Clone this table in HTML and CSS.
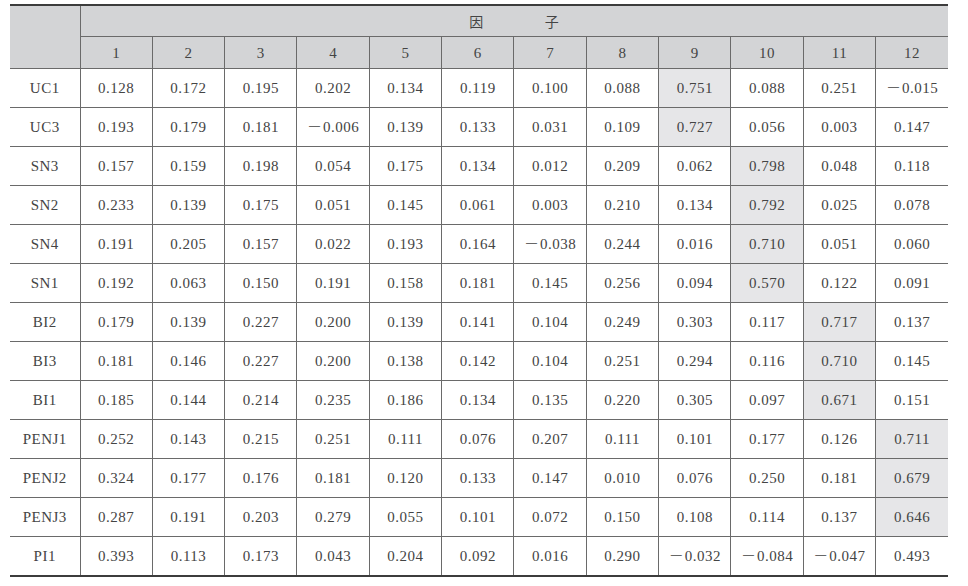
FILE: index.html
```html
<!DOCTYPE html>
<html>
<head>
<meta charset="utf-8">
<link rel="stylesheet" href="styles.css">
</head>
<body>
<table class="grid">
  <colgroup>
    <col class="c-label">
    <col span="12" class="c-num">
  </colgroup>
  <thead>
    <tr class="h1">
      <th rowspan="2" class="corner"></th>
      <th colspan="12" class="factor"><span>因</span><span>子</span></th>
    </tr>
    <tr class="h2">
      <th>1</th><th>2</th><th>3</th><th>4</th><th>5</th><th>6</th><th>7</th><th>8</th><th>9</th><th>10</th><th>11</th><th>12</th>
    </tr>
  </thead>
  <tbody>
    <tr><td>UC1</td><td>0.128</td><td>0.172</td><td>0.195</td><td>0.202</td><td>0.134</td><td>0.119</td><td>0.100</td><td>0.088</td><td class="hl">0.751</td><td>0.088</td><td>0.251</td><td><span class="neg">－</span>0.015</td></tr>
    <tr><td>UC3</td><td>0.193</td><td>0.179</td><td>0.181</td><td><span class="neg">－</span>0.006</td><td>0.139</td><td>0.133</td><td>0.031</td><td>0.109</td><td class="hl">0.727</td><td>0.056</td><td>0.003</td><td>0.147</td></tr>
    <tr><td>SN3</td><td>0.157</td><td>0.159</td><td>0.198</td><td>0.054</td><td>0.175</td><td>0.134</td><td>0.012</td><td>0.209</td><td>0.062</td><td class="hl">0.798</td><td>0.048</td><td>0.118</td></tr>
    <tr><td>SN2</td><td>0.233</td><td>0.139</td><td>0.175</td><td>0.051</td><td>0.145</td><td>0.061</td><td>0.003</td><td>0.210</td><td>0.134</td><td class="hl">0.792</td><td>0.025</td><td>0.078</td></tr>
    <tr><td>SN4</td><td>0.191</td><td>0.205</td><td>0.157</td><td>0.022</td><td>0.193</td><td>0.164</td><td><span class="neg">－</span>0.038</td><td>0.244</td><td>0.016</td><td class="hl">0.710</td><td>0.051</td><td>0.060</td></tr>
    <tr><td>SN1</td><td>0.192</td><td>0.063</td><td>0.150</td><td>0.191</td><td>0.158</td><td>0.181</td><td>0.145</td><td>0.256</td><td>0.094</td><td class="hl">0.570</td><td>0.122</td><td>0.091</td></tr>
    <tr><td>BI2</td><td>0.179</td><td>0.139</td><td>0.227</td><td>0.200</td><td>0.139</td><td>0.141</td><td>0.104</td><td>0.249</td><td>0.303</td><td>0.117</td><td class="hl">0.717</td><td>0.137</td></tr>
    <tr><td>BI3</td><td>0.181</td><td>0.146</td><td>0.227</td><td>0.200</td><td>0.138</td><td>0.142</td><td>0.104</td><td>0.251</td><td>0.294</td><td>0.116</td><td class="hl">0.710</td><td>0.145</td></tr>
    <tr><td>BI1</td><td>0.185</td><td>0.144</td><td>0.214</td><td>0.235</td><td>0.186</td><td>0.134</td><td>0.135</td><td>0.220</td><td>0.305</td><td>0.097</td><td class="hl">0.671</td><td>0.151</td></tr>
    <tr><td>PENJ1</td><td>0.252</td><td>0.143</td><td>0.215</td><td>0.251</td><td>0.111</td><td>0.076</td><td>0.207</td><td>0.111</td><td>0.101</td><td>0.177</td><td>0.126</td><td class="hl">0.711</td></tr>
    <tr><td>PENJ2</td><td>0.324</td><td>0.177</td><td>0.176</td><td>0.181</td><td>0.120</td><td>0.133</td><td>0.147</td><td>0.010</td><td>0.076</td><td>0.250</td><td>0.181</td><td class="hl">0.679</td></tr>
    <tr><td>PENJ3</td><td>0.287</td><td>0.191</td><td>0.203</td><td>0.279</td><td>0.055</td><td>0.101</td><td>0.072</td><td>0.150</td><td>0.108</td><td>0.114</td><td>0.137</td><td class="hl">0.646</td></tr>
    <tr><td>PI1</td><td>0.393</td><td>0.113</td><td>0.173</td><td>0.043</td><td>0.204</td><td>0.092</td><td>0.016</td><td>0.290</td><td><span class="neg">－</span>0.032</td><td><span class="neg">－</span>0.084</td><td><span class="neg">－</span>0.047</td><td>0.493</td></tr>
  </tbody>
</table>
</body>
</html>
```

FILE: styles.css
```css
html, body {
  margin: 0;
  padding: 0;
  background: #ffffff;
}

body {
  padding: 4px 0 0 10px;
  font-family: "Liberation Serif", "DejaVu Serif", "Noto Sans CJK SC", serif;
  color: #444444;
}

.grid {
  border-collapse: collapse;
  table-layout: fixed;
  width: 938px;
  border-top: 2px solid #3c3c3c;
  border-bottom: 2px solid #3c3c3c;
  font-size: 15px;
  line-height: 18px;
}

.c-label {
  width: 70px;
}

.grid th,
.grid td {
  padding: 0;
  text-align: center;
  vertical-align: middle;
  font-weight: normal;
  border: 1px solid #6a6a6a;
  white-space: nowrap;
  letter-spacing: 0.5px;
}

.grid tr > :first-child {
  border-left: none;
}

.grid tr > :last-child {
  border-right: none;
}

.grid thead th {
  background: #d3d4d6;
}

.h1 th {
  height: 30px;
}

.h2 th {
  height: 31px;
}

.factor {
  font-family: "Noto Sans CJK SC", serif;
  font-size: 14px;
  letter-spacing: 0;
}

.factor span + span {
  margin-left: 61px;
}

.grid tbody td {
  height: 38px;
}

.grid tbody tr:last-child td {
  border-bottom: 2px solid #3c3c3c;
}

.hl {
  background: #e6e6e8;
}

.neg {
  font-family: "Noto Sans CJK SC", sans-serif;
  font-weight: 300;
  letter-spacing: 0;
  line-height: 0;
  margin-right: 1px;
}
```
